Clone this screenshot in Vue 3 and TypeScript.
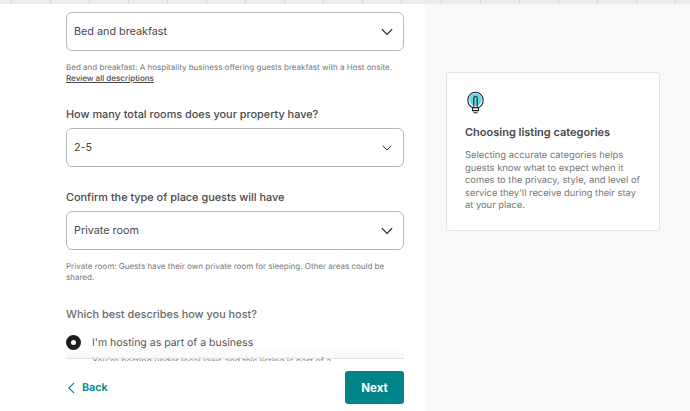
<script setup lang="ts">
const tabs: number[] = Array.from({ length: 18 }, (_, i) => i)
</script>

<template>
  <div class="page">
    <div class="strip">
      <span v-for="t in tabs" :key="t" class="tab"></span>
    </div>
    <div class="body">
      <main class="left">
        <div class="form-wrap">
          <div class="form">
            <button class="select">
              <span>Bed and breakfast</span>
              <svg class="chev" viewBox="0 0 14 9"><path d="M1 1.2 7 7.400 13 1.200" /></svg>
            </button>
            <p class="help">Bed and breakfast: A hospitality business offering guests breakfast with a Host onsite.<br /><a class="link">Review all descriptions</a></p>

            <h3 class="label">How many total rooms does your property have?</h3>
            <button class="select">
              <span>2-5</span>
              <svg class="chev small" viewBox="0 0 14 9"><path d="M1 1.2 7 7.400 13 1.200" /></svg>
            </button>

            <h3 class="label">Confirm the type of place guests will have</h3>
            <button class="select">
              <span>Private room</span>
              <svg class="chev" viewBox="0 0 14 9"><path d="M1 1.2 7 7.400 13 1.200" /></svg>
            </button>
            <p class="help">Private room: Guests have their own private room for sleeping. Other areas could be shared.</p>

            <h3 class="label host">Which best describes how you host?</h3>
            <div class="radio-row">
              <span class="radio"></span>
              <span class="radio-text">I'm hosting as part of a business</span>
            </div>
            <p class="radio-sub">You're hosting under local laws and this listing is part of a</p>
          </div>
          <div class="fade"></div>
        </div>
        <footer class="footer">
          <a class="back">
            <svg class="back-icon" viewBox="0 0 8 14"><path d="M7 1 1 7l6 6" /></svg>
            Back
          </a>
          <button class="next">Next</button>
        </footer>
      </main>
      <aside class="right">
        <div class="card">
          <svg class="bulb" viewBox="0 0 20 26">
            <circle cx="10" cy="9.500" r="7.300" fill="#5fd8e0" />
            <path class="bulb-line" d="M6.500 19C3 17.500 1 14 1 10a9 9 0 0 1 18 0c0 4-2 7.500-5.500 9" />
            <path class="bulb-line" d="M8 19V8a2 2 0 0 1 4 0v11M6.500 19h7v3.500h-7ZM7.500 25h5" />
          </svg>
          <h4 class="card-title">Choosing listing categories</h4>
          <p class="card-text">Selecting accurate categories helps guests know what to expect when it comes to the privacy, style, and level of service they'll receive during their stay at your place.</p>
        </div>
      </aside>
    </div>
  </div>
</template>

<style>
html, body { margin: 0; background: #fff; }
</style>

<style scoped>
.page {
  width: 690px;
  height: 411px;
  overflow: hidden;
  display: flex;
  flex-direction: column;
  font-family: "Inter", "Liberation Sans", sans-serif;
  text-rendering: geometricPrecision;
  color: #484848;
}
.strip {
  height: 4px;
  flex: none;
  display: flex;
  background: #eceeec;
  padding-left: 10.500px;
}
.tab {
  width: 39.100px;
  flex: none;
  box-sizing: border-box;
  border-left: 1px solid #d6d8d6;
}
.body {
  flex: 1;
  display: flex;
  min-height: 0;
}
.left {
  width: 425px;
  flex: none;
  display: flex;
  flex-direction: column;
  background: #fff;
}
.form-wrap {
  height: 356.500px;
  flex: none;
  position: relative;
  margin: 0 21px 0 66px;
}
.form {
  height: 100%;
  overflow: hidden;
  padding-top: 8px;
  box-sizing: border-box;
}
.fade {
  position: absolute;
  left: 0;
  right: 0;
  bottom: 2px;
  height: 12px;
  background: linear-gradient(to bottom, rgba(0, 0, 0, 0), rgba(0, 0, 0, 0.025));
  border-bottom: 1px solid #e2e2e2;
}
.select {
  width: 100%;
  height: 39px;
  box-sizing: border-box;
  border: 1px solid #b8b8b8;
  border-radius: 6px;
  background: #fff;
  display: flex;
  align-items: center;
  justify-content: space-between;
  padding: 0 10px 0 7px;
  font: inherit;
  font-size: 10.800px;
  color: #484848;
}
.chev {
  width: 12px;
  height: 8px;
  fill: none;
  stroke: #222;
  stroke-width: 1.300;
}
.chev.small {
  width: 10px;
  margin-right: 1px;
}
.help {
  margin: 11px 0 0;
  font-size: 8.030px;
  line-height: 11px;
  color: #767676;
}
.link {
  color: #484848;
  font-weight: 500;
  text-decoration: underline;
}
.label {
  margin: 23px 0 7px;
  font-size: 10.880px;
  line-height: 14px;
  font-weight: 500;
  color: #484848;
}
.host {
  margin-top: 24px;
  color: #6a6a6a;
}
.radio-row {
  display: flex;
  align-items: center;
  gap: 11px;
  margin-top: 13.500px;
}
.radio {
  width: 15px;
  height: 15px;
  box-sizing: border-box;
  border: 5px solid #1d1d1d;
  border-radius: 50%;
  background: #fff;
  flex: none;
}
.radio-text {
  font-size: 10.500px;
  line-height: 15px;
  color: #555;
}
.radio-sub {
  margin: 6.500px 0 0 26px;
  font-size: 8.800px;
  line-height: 11px;
  color: #767676;
  white-space: nowrap;
}
.footer {
  flex: 1;
  margin: 0 21px 0 66px;
  padding: 4px 0 0 2px;
  display: flex;
  align-items: center;
  justify-content: space-between;
  background: #fff;
}
.back {
  display: flex;
  align-items: center;
  gap: 7px;
  font-size: 10.800px;
  font-weight: 600;
  color: #008489;
}
.back-icon {
  width: 7px;
  height: 12px;
  fill: none;
  stroke: #008489;
  stroke-width: 1.300;
}
.next {
  width: 59px;
  height: 33px;
  border: none;
  border-radius: 3px;
  background: #008489;
  color: #fff;
  font: inherit;
  font-size: 11.500px;
  font-weight: 700;
}
.right {
  flex: 1;
  background: #f9f9f9;
  padding: 68px 30px 0 21px;
}
.card {
  box-sizing: border-box;
  height: 159px;
  width: 214px;
  background: #fff;
  border: 1px solid #e4e4e4;
  border-radius: 3px;
  padding: 18px 18px 0;
}
.bulb {
  display: block;
  width: 17px;
  height: 23px;
  margin-left: 2px;
}
.bulb-line {
  fill: none;
  stroke: #222;
  stroke-width: 1.300;
}
.card-title {
  margin: 11px 0 0;
  font-size: 11px;
  line-height: 14px;
  font-weight: 600;
  color: #484848;
}
.card-text {
  margin: 11px 0 0;
  font-size: 9.350px;
  line-height: 12.500px;
  color: #767676;
}
</style>
